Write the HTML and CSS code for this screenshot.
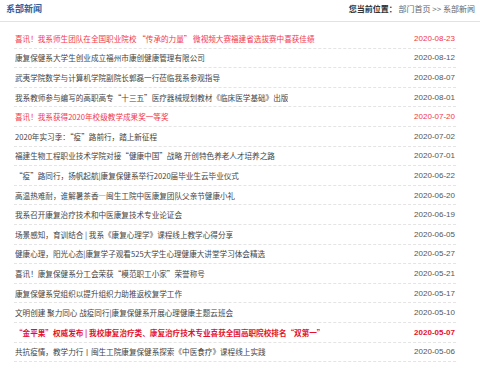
FILE: index.html
```html
<!DOCTYPE html>
<html lang="zh-CN">
<head>
  <meta charset="UTF-8">
  <meta name="viewport" content="width=device-width, initial-scale=1.0">
  <title>系部新闻</title>
  <link rel="stylesheet" href="styles.css">
</head>
<body>
  <div class="news">
    <div class="news-head">
      <h2 class="news-title">系部新闻</h2>
      <div class="crumb"><b>您当前位置：</b> <a href="#">部门首页</a> &gt;&gt; <a href="#">系部新闻</a></div>
    </div>

    <ul class="news-list">
      <li class="hot"><a href="#">喜讯！我系师生团队在全国职业院校 “传承的力量” 微视频大赛福建省选拔赛中喜获佳绩</a><span>2020-08-23</span></li>
      <li><a href="#">康复保健系大学生创业成立福州市康创健康管理有限公司</a><span>2020-08-12</span></li>
      <li><a href="#">武夷学院数学与计算机学院副院长郭磊一行莅临我系参观指导</a><span>2020-08-07</span></li>
      <li><a href="#">我系教师参与编写的高职高专“十三五”医疗器械规划教材《临床医学基础》出版</a><span>2020-08-01</span></li>
      <li class="hot"><a href="#">喜讯！我系获得2020年校级教学成果奖一等奖</a><span>2020-07-20</span></li>
      <li><a href="#">2020年实习季：“疫”路前行，踏上新征程</a><span>2020-07-02</span></li>
      <li><a href="#">福建生物工程职业技术学院对接“健康中国”战略 开创特色养老人才培养之路</a><span>2020-07-01</span></li>
      <li><a href="#">“疫”路同行，扬帆起航|康复保健系举行2020届毕业生云毕业仪式</a><span>2020-06-22</span></li>
      <li><a href="#">高温热难耐，谁解暑茶香—闽生工院中医康复团队父亲节健康小礼</a><span>2020-06-20</span></li>
      <li><a href="#">我系召开康复治疗技术和中医康复技术专业论证会</a><span>2020-06-19</span></li>
      <li><a href="#">场景感知，育训结合 | 我系《康复心理学》课程线上教学心得分享</a><span>2020-06-05</span></li>
      <li><a href="#">健康心理，阳光心态|康复学子观看525大学生心理健康大讲堂学习体会精选</a><span>2020-05-27</span></li>
      <li><a href="#">喜讯！康复保健系分工会荣获“模范职工小家”荣誉称号</a><span>2020-05-21</span></li>
      <li><a href="#">康复保健系党组织以提升组织力助推返校复学工作</a><span>2020-05-17</span></li>
      <li><a href="#">文明创建 聚力同心 战疫同行|康复保健系开展心理健康主题云班会</a><span>2020-05-10</span></li>
      <li class="top"><a href="#">“金平果”权威发布 | 我校康复治疗类、康复治疗技术专业喜获全国高职院校排名“双第一”</a><span>2020-05-07</span></li>
      <li><a href="#">共抗疫情，教学力行丨闽生工院康复保健系探索《中医食疗》课程线上实践</a><span>2020-05-06</span></li>
    </ul>
  </div>
</body>
</html>
```

FILE: styles.css
```css
/* reset */
* {
  margin: 0;
  padding: 0;
  box-sizing: border-box;
}

body {
  font-family: "Noto Sans CJK SC", sans-serif;
  font-size: 8px;
  color: #444;
  background-color: #fff;
}

a {
  color: inherit;
  text-decoration: none;
}

/* naglowek sekcji */
.news-head {
  display: flex;
  justify-content: space-between;
  align-items: center;
  height: 22px;
  padding: 0 5px 4px 6px;
  border-bottom: 1px solid #e2e2e2;
}

.news-title {
  font-size: 9px;
  font-weight: bold;
  color: #2f5f9e;
}

.crumb {
  color: #666;
}

.crumb b {
  color: #333;
  font-weight: bold;
}

/* lista newsow */
.news-list {
  list-style: none;
  margin: 7px 24px 0 14px;
}

.news-list li {
  display: flex;
  justify-content: space-between;
  align-items: center;
  height: 19.6px;
  padding: 0 1px;
  border-bottom: 1px dashed #e4e4e4;
  color: #444;
}

.news-list li a {
  font-size: 7.6px;
  white-space: nowrap;
  overflow: hidden;
  text-overflow: ellipsis;
}

.news-list li span {
  flex-shrink: 0;
  margin-left: 10px;
  font-family: "Liberation Sans", Arial, sans-serif;
  color: #555;
}

.news-list li.hot,
.news-list li.hot span {
  color: #f2374a;
}

.news-list li.top,
.news-list li.top span {
  color: #e4102b;
  font-weight: bold;
}
```
